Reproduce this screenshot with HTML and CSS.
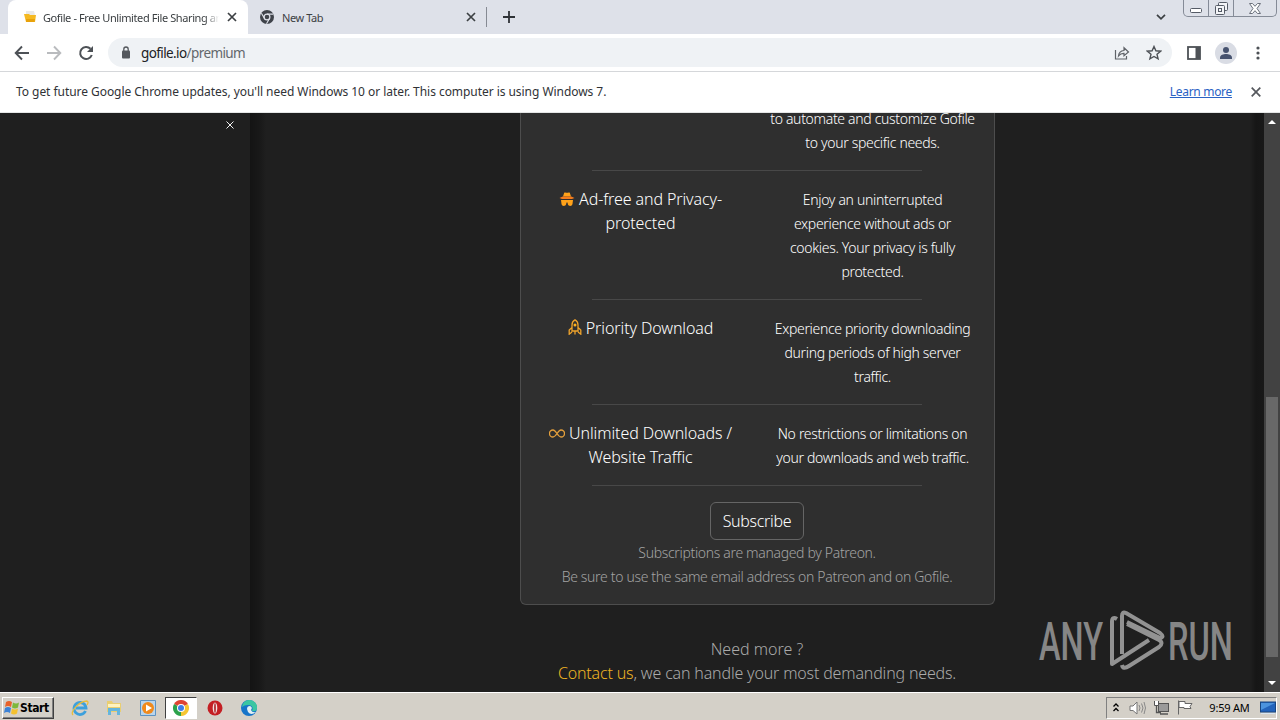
FILE: index.html
```
<!DOCTYPE html>
<html lang="en">
<head>
    <meta charset="UTF-8">
    <meta name="viewport" content="width=device-width, initial-scale=1.0">
    <title>Gofile - Free Unlimited File Sharing</title>
    <link rel="stylesheet" href="styles.css">
</head>
<body>
    <!-- Tabs -->
    <div class="tab-strip">
        <div class="tab active">
            <svg class="favicon" width="14" height="14" viewBox="0 0 14 14"><path d="M3 1h8l1 4H3z" fill="#e9e9e9"/><path d="M1 4h5l1 1h6l-1 7H3z" fill="#f5b921"/><path d="M3 9h9l-.5 3H3z" fill="#e8a20c"/></svg>
            <span class="tab-title fade">Gofile - Free Unlimited File Sharing an</span>
            <svg class="tab-close" width="10" height="10" viewBox="0 0 10 10"><path d="M1 1l8 8M9 1L1 9" stroke="#3c4043" stroke-width="1.7"/></svg>
        </div>
        <div class="tab">
            <svg class="favicon" width="14" height="14" viewBox="0 0 14 14"><circle cx="7" cy="7" r="7" fill="#3f434a"/><circle cx="7" cy="7" r="2.9" fill="#3f434a" stroke="#dee1e9" stroke-width="1.2"/><path d="M7 4.1h6.3M4.5 8.4L1.4 3.2M9.5 8.5l-3 5.3" stroke="#dee1e9" stroke-width="1.1"/></svg>
            <span class="tab-title">New Tab</span>
            <svg class="tab-close" width="10" height="10" viewBox="0 0 10 10"><path d="M1 1l8 8M9 1L1 9" stroke="#3c4043" stroke-width="1.7"/></svg>
        </div>
        <span class="tab-sep"></span>
        <svg class="new-tab" width="12" height="12" viewBox="0 0 12 12"><path d="M6 0v12M0 6h12" stroke="#2f3237" stroke-width="1.8"/></svg>
        <svg class="tab-search" width="10" height="6" viewBox="0 0 10 6"><path d="M1 .8l4 4 4-4" fill="none" stroke="#3c4043" stroke-width="1.7"/></svg>
        <div class="window-buttons">
            <span class="wb min"><svg width="12" height="5" viewBox="0 0 12 5"><rect x=".5" y=".5" width="11" height="4" rx="1" fill="#fff" stroke="#555b66"/></svg></span>
            <span class="wb max"><svg width="13" height="13" viewBox="0 0 13 13"><g fill="#f3f4f7" stroke="#555b66"><rect x="3.5" y=".5" width="9" height="8" rx="1"/><rect x=".5" y="3.5" width="9" height="9" rx="1"/><rect x="3.5" y="6.5" width="3" height="3"/></g></svg></span>
            <span class="wb close"><svg width="12" height="11" viewBox="0 0 12 11"><path d="M.5.5h3L6 3.3 8.500.5h3L8 5.500l3.500 5h-3L6 7.700 3.500 10.500h-3L4 5.500z" fill="#fff" stroke="#6b717c"/></svg></span>
        </div>
    </div>

    <!-- Address bar -->
    <div class="toolbar">
        <svg class="nav-icon" width="16" height="16" viewBox="0 0 16 16"><path d="M15 8H2M8 1.500L1.700 8 8 14.500" fill="none" stroke="#4d5156" stroke-width="1.900"/></svg>
        <svg class="nav-icon" width="16" height="16" viewBox="0 0 16 16"><path d="M1 8h13M8 1.500L14.300 8 8 14.500" fill="none" stroke="#b9bbbe" stroke-width="1.900"/></svg>
        <svg class="nav-icon" width="16" height="16" viewBox="0 0 16 16"><path d="M13.800 10A6 6 0 1 1 12.500 3.800" fill="none" stroke="#4d5156" stroke-width="2"/><path d="M15 1v6H9z" fill="#4d5156"/></svg>
        <div class="omnibox">
            <svg width="10" height="13" viewBox="0 0 10 13"><rect x="1" y="4.500" width="8" height="8" rx="1" fill="#54585d"/><path d="M2.800 5V3.200a2.200 2.200 0 0 1 4.400 0V5" fill="none" stroke="#54585d" stroke-width="1.300"/></svg>
            <span class="url"><b>gofile.io</b>/premium</span>
            <svg class="share" width="16" height="14" viewBox="0 0 16 14"><path d="M1.500 4v9h11v-3M4.500 10c.3-3.500 2.300-5.300 5.500-5.500V1.700L14.500 6 10 9.800V7.300C7.500 7.200 6 8 4.500 10z" fill="none" stroke="#5f6368" stroke-width="1.200"/></svg>
            <svg class="star" width="16" height="16" viewBox="0 0 16 16"><path d="M8 1.500l1.900 4.300 4.700.4-3.600 3.100 1.100 4.600L8 11.500l-4.100 2.400L5 9.300 1.400 6.200l4.700-.4z" fill="none" stroke="#4d5156" stroke-width="1.400"/></svg>
        </div>
        <svg class="panel-icon" width="14" height="14" viewBox="0 0 14 14"><rect x="1" y="1" width="12" height="12" fill="none" stroke="#4d5156" stroke-width="1.800"/><path d="M8.500 1H13v12H8.500z" fill="#4d5156"/></svg>
        <svg class="profile" width="22" height="22" viewBox="0 0 22 22"><circle cx="11" cy="11" r="11" fill="#d9dce4"/><circle cx="11" cy="8" r="3" fill="#47536f"/><path d="M5 17v-1.500c0-2.500 3.500-3.500 6-3.500s6 1 6 3.500V17z" fill="#47536f"/></svg>
        <svg class="menu" width="4" height="14" viewBox="0 0 4 14"><g fill="#4d5156"><circle cx="2" cy="2" r="1.600"/><circle cx="2" cy="7" r="1.600"/><circle cx="2" cy="12" r="1.600"/></g></svg>
    </div>

    <div class="infobar">
        <span class="info-text">To get future Google Chrome updates, you'll need Windows 10 or later. This computer is using Windows 7.</span>
        <a href="#" class="learn-more">Learn more</a>
        <svg width="10" height="10" viewBox="0 0 10 10"><path d="M.7.7l8.600 8.600M9.300.7L.7 9.300" stroke="#55585d" stroke-width="1.700"/></svg>
    </div>

    <!-- Page -->
    <div class="viewport">
        <aside class="sidebar">
            <svg width="8" height="8" viewBox="0 0 8 8"><path d="M.5.5l7 7M7.500.5l-7 7" stroke="#f2f2f2"/></svg>
        </aside>
        <main class="content">
            <div class="card">
                <div class="feature">
                    <div class="name"></div>
                    <div class="desc">to automate and customize Gofile<br>to your specific needs.</div>
                </div>
                <hr>
                <div class="feature">
                    <div class="name">
                        <svg class="ico" width="16" height="14" viewBox="0 0 16 14"><path d="M4 4.500L5.200.8C6.200 0 7 .8 8 .8s1.800-.8 2.800 0L12 4.500z" fill="#ffa21a"/><path d="M3.700 4.600h8.600L15.500 6 13 7H3L.5 6z" fill="#f57c1c"/><path d="M2 8h12l-.5 4c-.4 2.500-4 2.500-4.600.2L8.500 10.500h-1L7.100 12.200c-.6 2.300-4.200 2.300-4.600-.2z" fill="#ffa21a"/></svg>
                        <span>Ad-free and Privacy-</span><br><span>protected</span>
                    </div>
                    <div class="desc">Enjoy an uninterrupted<br>experience without ads or<br>cookies. Your privacy is fully<br>protected.</div>
                </div>
                <hr>
                <div class="feature">
                    <div class="name">
                        <svg class="ico rocket" width="14" height="16" viewBox="0 0 14 16"><path d="M4 12V6C4 3.500 5.500 1.500 7 .8 8.500 1.500 10 3.500 10 6v6zM4 8.500L1.200 11v4.200L4 13M10 8.500l2.800 2.500v4.200L10 13M7 12v3.500" fill="none" stroke="#f0a42c" stroke-width="1.300"/><circle cx="7" cy="6" r="1.500" fill="#ffb01c"/></svg>
                        <span>Priority Download</span>
                    </div>
                    <div class="desc">Experience priority downloading<br>during periods of high server<br>traffic.</div>
                </div>
                <hr>
                <div class="feature">
                    <div class="name">
                        <svg class="ico infinity" width="16" height="9" viewBox="0 0 16 9"><path d="M8 4.500C6.300 2 5.500 1 4 1a3.300 3.300 0 0 0 0 7c1.500 0 2.300-1 4-3.500S10.500 1 12 1a3.300 3.300 0 0 1 0 7c-1.500 0-2.300-1-4-3.500z" fill="none" stroke="#e5a03c" stroke-width="1.300"/></svg>
                        <span>Unlimited Downloads /</span><br><span>Website Traffic</span>
                    </div>
                    <div class="desc">No restrictions or limitations on<br>your downloads and web traffic.</div>
                </div>
                <hr>
                <button class="subscribe">Subscribe</button>
                <p class="note">Subscriptions are managed by Patreon.<br>Be sure to use the same email address on Patreon and on Gofile.</p>
            </div>
            <p class="more"><span class="q">Need more ?</span><br><a href="#">Contact us</a>, we can handle your most demanding needs.</p>
        </main>
        <div class="scrollbar">
            <svg width="8" height="4" viewBox="0 0 8 4"><path d="M4 0l4 4H0z" fill="#fff"/></svg>
            <span class="thumb"></span>
            <svg width="8" height="4" viewBox="0 0 8 4"><path d="M0 0h8L4 4z" fill="#fff"/></svg>
        </div>
        <svg class="watermark" width="200" height="64" viewBox="0 0 200 64">
            <g class="wm-text">
                <text x="1" y="52" textLength="64" lengthAdjust="spacingAndGlyphs">ANY</text>
                <text x="130" y="52" textLength="65" lengthAdjust="spacingAndGlyphs">RUN</text>
            </g>
            <path d="M79 11q-5-3-5 3v42l37-24M84 46V8q0-5 4-3l34 20q5 4 0 5L89 14M84 57q1 5 7 1l30-19q5-4 0-7L89 16" fill="none" stroke="#929292" stroke-width="4" stroke-linejoin="round"/>
        </svg>
    </div>

    <!-- Taskbar -->
    <div class="taskbar">
        <div class="start">
            <svg width="16" height="15" viewBox="0 0 16 15"><path d="M2 2q3-2 6 0L7 7Q4 5 1 7z" fill="#e8622a"/><path d="M9 2.500q3 2 6 0L14 7.500q-3 2-6 0z" fill="#7db83a"/><path d="M1 8q3-2 6 0l-1 5q-3-2-6 0z" fill="#3c82d6"/><path d="M8 8.500q3 2 6 0l-1 5q-3 2-6 0z" fill="#f4c12f"/></svg>
            <span>Start</span>
        </div>
        <div class="apps">
            <span class="app"><svg width="18" height="18" viewBox="0 0 18 18"><path d="M14.500 12A6 6 0 1 1 15 9H5" fill="none" stroke="#3da0dc" stroke-width="2.800"/><path d="M2 16C-1 13 8 2 16 2q2 1 0 4" fill="none" stroke="#e9bd3b" stroke-width="1.300"/></svg></span>
            <span class="app"><svg width="18" height="18" viewBox="0 0 18 18"><path d="M2 2h5l1 2h8v9H2z" fill="#e9ce72"/><path d="M3 5h12v3H3z" fill="#fff3bf"/><path d="M3 16V9h12v7h-3v-4H6v4z" fill="#65b5dd"/></svg></span>
            <span class="app"><svg width="18" height="18" viewBox="0 0 18 18"><path d="M1.500 1.500h15v15h-15z" fill="#b9d5ec" stroke="#5d93c2"/><circle cx="9" cy="9" r="6" fill="#f08a1c"/><path d="M7 5.500v7L13 9z" fill="#fff"/></svg></span>
            <span class="app pressed"><svg width="16" height="16" viewBox="0 0 16 16"><path d="M8 8L1.070 4A8 8 0 0 1 14.930 4z" fill="#df4433"/><path d="M8 8V16A8 8 0 0 1 1.070 4z" fill="#2ca24c"/><path d="M8 8L14.930 4A8 8 0 0 1 8 16z" fill="#f6c631"/><circle cx="8" cy="8" r="4" fill="#fff"/><circle cx="8" cy="8" r="3" fill="#3f7ee8"/></svg></span>
            <span class="app"><svg width="16" height="16" viewBox="0 0 16 16"><circle cx="8" cy="8" r="7.500" fill="#c41f24"/><ellipse cx="8" cy="8" rx="2.300" ry="5.500" fill="#f4e3e3"/><ellipse cx="8" cy="8" rx=".8" ry="5" fill="#a5161b"/></svg></span>
            <span class="app"><svg width="16" height="16" viewBox="0 0 16 16"><circle cx="8" cy="8" r="8" fill="#1674c9"/><path d="M1 7A7.500 7.500 0 0 1 16 8q0 4-5 3 2-5-3-6-4-.5-7 2z" fill="#3bc6a2"/><path d="M6 9q0-3 3-3 3 1 1 4 1 3 5 2-5 4-8 0z" fill="#e3eff3"/></svg></span>
        </div>
        <div class="tray">
            <svg class="chev" width="6" height="9" viewBox="0 0 6 9"><path d="M.5 3.500L3 1l2.500 2.500M.5 8L3 5.500 5.500 8" fill="none" stroke="#000" stroke-width="1.300"/></svg>
            <svg class="vol" width="17" height="14" viewBox="0 0 17 14"><path d="M1 5h3l4-4v12L4 9.500H1z" fill="#fff" stroke="#777"/><path d="M10 4q2 3 0 6M12.500 2.500q3 4.500 0 9M15 1q3 6 0 12" fill="none" stroke="#888"/></svg>
            <svg class="net" width="17" height="15" viewBox="0 0 17 15"><rect x="5.500" y="3.500" width="10" height="8" fill="#9a9a9a" stroke="#555"/><path d="M7 14h8M3.500 6v6.500H8" fill="none" stroke="#555" stroke-width="1.300"/><path d="M1.500 1v4.500h4V1" fill="#fff" stroke="#555"/></svg>
            <svg class="flag" width="16" height="15" viewBox="0 0 16 15"><path d="M1.500 14.500V.5M2 1.500h6v2h7l-2 3 1 2H7V7.500H2z" fill="#fff" stroke="#666"/></svg>
            <span class="clock">9:59 AM</span>
            <svg width="16" height="14" viewBox="0 0 16 14"><rect x=".5" y="1" width="15" height="10" fill="#2263bb" stroke="#174681"/><path d="M1 2h14L1 9z" fill="#4b93de"/><path d="M1 12.500h14" stroke="#d8e5f0"/></svg>
        </div>
    </div>
</body>
</html>
```
FILE: styles.css
```
* {
    margin: 0;
    padding: 0;
    box-sizing: border-box;
}

body {
    width: 1280px;
    height: 720px;
    overflow: hidden;
    display: flex;
    flex-direction: column;
    font-family: 'Noto Sans', 'Open Sans', sans-serif;
    background: #1f1f1f;
}

svg {
    display: block;
    flex-shrink: 0;
}

/* Tabs */
.tab-strip {
    height: 34px;
    flex-shrink: 0;
    display: flex;
    align-items: center;
    padding-left: 8px;
    background: #dee1e9;
}

.tab {
    width: 240px;
    height: 34px;
    display: flex;
    align-items: center;
    padding: 0 12px 0 12px;
    color: #3c4043;
}

.tab.active {
    background: #fff;
    border-radius: 8px 8px 0 0;
    padding: 0 11px 0 15px;
}

.tab-title {
    flex: 1;
    margin: 0 8px;
    overflow: hidden;
    white-space: nowrap;
    font-size: 11px;
    letter-spacing: -0.4px;
}

.active .tab-title {
    margin-left: 6px;
}

.fade {
    -webkit-mask-image: linear-gradient(to right, #000 92%, transparent);
    mask-image: linear-gradient(to right, #000 92%, transparent);
}

.tab-sep {
    width: 1px;
    height: 20px;
    margin-left: -2px;
    background: #868a93;
}

.new-tab {
    margin-left: 16px;
}

.tab-search {
    margin-left: auto;
    margin-right: 17px;
}

.window-buttons {
    display: flex;
    align-self: flex-start;
    width: 94px;
    height: 17px;
    margin-right: 3px;
    border: 1px solid #858b97;
    border-top: none;
    border-radius: 0 0 5px 5px;
}

.wb {
    display: flex;
    align-items: center;
    justify-content: center;
    width: 25px;
    border-right: 1px solid #858b97;
}

.wb.min {
    align-items: flex-end;
    padding-bottom: 3px;
}

.wb.close {
    flex: 1;
    border: none;
}

/* Address bar */
.toolbar {
    height: 38px;
    flex-shrink: 0;
    display: flex;
    align-items: center;
    padding: 0 20px 0 14px;
    background: #fff;
    border-bottom: 1px solid #d5d7da;
}

.nav-icon {
    margin-right: 16px;
}

.omnibox {
    display: flex;
    align-items: center;
    width: 1064px;
    height: 29px;
    margin-left: -2px;
    padding: 0 10px 0 13px;
    border-radius: 15px;
    background: #eff2f5;
}

.url {
    flex: 1;
    margin-left: 10px;
    font-size: 13.5px;
    letter-spacing: -0.6px;
    color: #63676c;
}

.url b {
    font-weight: 400;
    color: #202124;
}

.star {
    margin-left: 16px;
}

.panel-icon {
    margin-left: 15px;
}

.profile {
    margin-left: 14px;
}

.menu {
    margin-left: auto;
}

.infobar {
    height: 41px;
    flex-shrink: 0;
    display: flex;
    align-items: center;
    padding: 0 19px 1px 16px;
    background: #fff;
    border-bottom: 1px solid #e4e6e6;
    font-size: 12px;
    letter-spacing: -0.05px;
    color: #303236;
}

.info-text {
    flex: 1;
}

.learn-more {
    margin-right: 19px;
    letter-spacing: -0.3px;
    color: #2a62c4;
}

/* Page */
.viewport {
    position: relative;
    height: 579px;
    flex-shrink: 0;
    display: flex;
    overflow: hidden;
}

.sidebar {
    width: 250px;
    padding: 8px 16px;
    display: flex;
    justify-content: flex-end;
    background: #1f1f1f;
}

.content {
    width: 1014px;
    display: flex;
    flex-direction: column;
    align-items: center;
    background: linear-gradient(to right, #141414, #191919 10px, #1f1f1f 16px, #1f1f1f 1000px, #161616 1006px, #181818);
}

.card {
    width: 475px;
    margin-top: -7px;
    padding-bottom: 15px;
    border: 1px solid #4d4d4d;
    border-top: none;
    border-radius: 0 0 6px 6px;
    background: #2f2f2f;
    text-align: center;
    color: #fff;
    font-weight: 300;
}

.feature {
    display: flex;
    padding: 0 2px 0 4px;
    line-height: 24px;
    white-space: nowrap;
}

.name {
    width: 232px;
    font-size: 16px;
    letter-spacing: -0.1px;
}

.desc {
    width: 232px;
    padding-top: 1px;
    margin-bottom: -1px;
    font-size: 14px;
    letter-spacing: -0.32px;
}

.ico {
    display: inline-block;
    vertical-align: -1px;
}

.infinity {
    vertical-align: 1px;
}

.card hr {
    width: 330px;
    margin: 16px auto 16px 71px;
    border: none;
    border-top: 1px solid #484848;
}

.subscribe {
    display: block;
    width: 94px;
    height: 38px;
    margin: 0 auto;
    border: 1px solid #656565;
    border-radius: 6px;
    background: transparent;
    color: #fff;
    font: 300 16px 'Noto Sans', sans-serif;
    letter-spacing: -0.3px;
}

.note {
    margin-top: 1px;
    font-size: 14px;
    line-height: 24px;
    letter-spacing: -0.33px;
    color: #a3a3a3;
}

.more {
    margin-top: 32px;
    text-align: center;
    font-size: 16px;
    font-weight: 300;
    line-height: 24px;
    letter-spacing: -0.17px;
    color: #aaa;
}

.q {
    letter-spacing: 0;
}

.more a {
    color: #eeb523;
    text-decoration: none;
}

.scrollbar {
    width: 16px;
    display: flex;
    flex-direction: column;
    align-items: center;
    padding: 7px 0;
    background: #424242;
}

.thumb {
    width: 12px;
    height: 260px;
    margin-top: auto;
    margin-bottom: 24px;
    background: #686868;
}

.watermark {
    position: absolute;
    left: 1038px;
    top: 495px;
}

.wm-text {
    font-family: 'Roboto', sans-serif;
    font-size: 53px;
    font-weight: 500;
    fill: #868686;
}

/* Taskbar */
.taskbar {
    height: 28px;
    display: flex;
    align-items: center;
    padding: 2px 3px 0 2px;
    border-top: 1px solid #fff;
    background: #d4d0c8;
    color: #000;
}

.start {
    display: flex;
    align-items: center;
    width: 52px;
    height: 22px;
    padding-left: 1px;
    border: 1px solid;
    border-color: #fff #404040 #404040 #fff;
    box-shadow: inset -1px -1px #808080;
    font: bold 12px 'DejaVu Sans Condensed', 'DejaVu Sans', sans-serif;
    letter-spacing: -0.4px;
}

.apps {
    display: flex;
    margin-left: 9px;
}

.app {
    display: flex;
    align-items: center;
    justify-content: center;
    width: 34px;
    height: 22px;
}

.app.pressed {
    width: 32px;
    margin-right: 1px;
    background: #fff;
    border: 1px solid;
    border-color: #404040 #fff #fff #404040;
}

.tray {
    display: flex;
    align-items: center;
    width: 171px;
    height: 22px;
    margin-left: auto;
    padding: 0 0 0 6px;
    border: 1px solid;
    border-color: #808080 #fff #fff #808080;
}

.vol {
    margin-left: 10px;
}

.net {
    margin-left: 7px;
}

.flag {
    margin-left: 7px;
}

.clock {
    flex: 1;
    padding-left: 6px;
    text-align: center;
    font-size: 11px;
    letter-spacing: -0.2px;
}
```
